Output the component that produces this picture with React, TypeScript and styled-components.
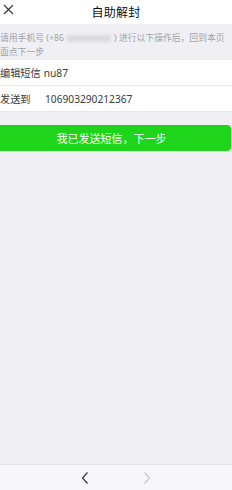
import styled, { createGlobalStyle } from "styled-components";

const Global = createGlobalStyle`
  html, body { margin: 0; padding: 0; }
  body {
    font-family: "Noto Sans", "Noto Sans CJK SC", sans-serif;
    background: #efeff4;
  }
`;

const Page = styled.div`
  width: 232px;
  height: 490px;
  display: flex;
  flex-direction: column;
  background: #efeff4;
  overflow: hidden;
`;

const Header = styled.div`
  height: 24px;
  background: #fff;
  display: flex;
  align-items: center;
  justify-content: center;
  position: relative;
  flex-shrink: 0;
`;

const Close = styled.div`
  position: absolute;
  left: 3px;
  top: 4px;
  width: 11px;
  height: 11px;
  display: flex;
`;

const Title = styled.div`
  font-size: 12px;
  color: #111;
  letter-spacing: 0.3px;
`;

const Notice = styled.div`
  padding: 7px 4px 1px 0;
  font-size: 8.8px;
  line-height: 14px;
  color: #a3a3a6;
`;

const Blur = styled.span`
  display: inline-block;
  width: 44px;
  height: 7px;
  margin: 0 3px;
  vertical-align: middle;
  background: #dcdce0;
  filter: blur(1.5px);
`;

const List = styled.div`
  background: #fff;
`;

const Row = styled.div`
  height: 25px;
  display: flex;
  align-items: center;
  font-size: 10.2px;
  color: #3a3a3a;
  border-bottom: 1px solid #e9e9ed;
`;

const Label = styled.span<{ $w?: number }>`
  width: ${(p) => (p.$w ? p.$w + "px" : "auto")};
  flex-shrink: 0;
  margin-right: 3px;
`;

const Main = styled.div`
  flex: 1;
  padding-top: 13px;
`;

const Button = styled.button`
  display: block;
  width: 240px;
  margin-left: -9px;
  height: 26px;
  border: none;
  border-radius: 4px;
  background: #1fd51c;
  color: #fff;
  font-family: "Noto Sans CJK SC", sans-serif;
  font-size: 11px;
  padding: 0;
  padding-left: 1px;
`;

const Toolbar = styled.div`
  height: 25px;
  background: #f7f7f9;
  border-top: 1px solid #e4e4e8;
  display: flex;
  align-items: center;
  justify-content: center;
  gap: 52px;
  flex-shrink: 0;
`;

const Arrow = styled.div`
  width: 10px;
  height: 14px;
  display: flex;
`;

export default function App() {
  return (
    <Page>
      <Global />
      <Header>
        <Close>
          <svg width="11" height="11" viewBox="0 0 11 11">
            <path d="M1 1 L10 10 M10 1 L1 10" stroke="#333" strokeWidth="1.1" />
          </svg>
        </Close>
        <Title>自助解封</Title>
      </Header>
      <Notice>
        请用手机号 (+86<Blur />) 进行以下操作后，回到本页面点下一步
      </Notice>
      <List>
        <Row>
          <Label>编辑短信</Label>
          <span>nu87</span>
        </Row>
        <Row>
          <Label $w={42}>发送到</Label>
          <span>106903290212367</span>
        </Row>
      </List>
      <Main>
        <Button>我已发送短信，下一步</Button>
      </Main>
      <Toolbar>
        <Arrow>
          <svg width="10" height="14" viewBox="0 0 10 14">
            <path d="M7.5 1.5 L2.5 7 L7.5 12.5" fill="none" stroke="#333" strokeWidth="1.2" />
          </svg>
        </Arrow>
        <Arrow>
          <svg width="10" height="14" viewBox="0 0 10 14">
            <path d="M2.5 1.5 L7.5 7 L2.5 12.5" fill="none" stroke="#c8c8cc" strokeWidth="1.2" />
          </svg>
        </Arrow>
      </Toolbar>
    </Page>
  );
}
